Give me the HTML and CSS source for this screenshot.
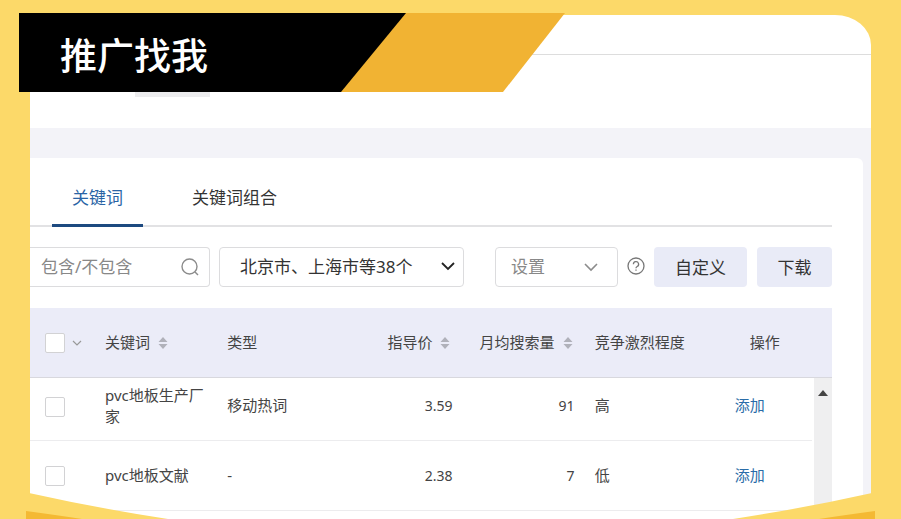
FILE: index.html
```html
<!DOCTYPE html>
<html lang="zh-CN">
<head>
  <meta charset="UTF-8" />
  <meta name="viewport" content="width=device-width, initial-scale=1.0" />
  <title>推广找我</title>
  <link rel="stylesheet" href="styles.css">
</head>
<body>

<div class="page">
  <!-- Banner -->
  <header class="banner">
    <h1 class="banner-title">推广找我</h1>
  </header>

  <main class="panel">
    <div class="topbar"></div>
    <div class="subbar"><span class="chip"></span></div>

    <div class="content">
      <section class="card">
        <nav class="tabs">
          <a href="#" class="tab active">关键词</a>
          <a href="#" class="tab">关键词组合</a>
        </nav>

        <!-- Filters -->
        <div class="toolbar">
          <label class="search">
            <input type="text" placeholder="包含/不包含" aria-label="包含/不包含">
            <svg width="20" height="20" viewBox="0 0 20 20" fill="none" stroke="#8c8c8c" stroke-width="1.4">
              <circle cx="9.5" cy="9.5" r="7.5"/>
              <path d="M15 15l3 3"/>
            </svg>
          </label>
          <div class="select region">
            <select aria-label="地域">
              <option>北京市、上海市等38个</option>
            </select>
            <svg width="14" height="10" viewBox="0 0 14 10" fill="none" stroke="#222" stroke-width="1.8">
              <path d="M1 1l6 6 6-6"/>
            </svg>
          </div>
          <div class="select setting">
            <select aria-label="设置">
              <option>设置</option>
            </select>
            <svg width="14" height="10" viewBox="0 0 14 10" fill="none" stroke="#8c8c8c" stroke-width="1.6">
              <path d="M1 2l6 6 6-6"/>
            </svg>
          </div>
          <button class="help" aria-label="帮助">
            <svg width="18" height="18" viewBox="0 0 18 18" fill="none" stroke="#777" stroke-width="1.3">
              <circle cx="9" cy="9" r="8"/>
              <path d="M6.4 7.2a2.6 2.6 0 1 1 3.8 2.3c-.8.4-1.2.8-1.2 1.7M9 12.4v1.4"/>
            </svg>
          </button>
          <button class="btn btn-custom">自定义</button>
          <button class="btn btn-download">下载</button>
        </div>

        <!-- Keyword list -->
        <table class="keywords">
          <colgroup>
            <col class="col-check">
            <col class="col-word">
            <col class="col-type">
            <col class="col-num">
            <col class="col-num">
            <col class="col-level">
            <col class="col-action">
            <col class="col-scroll">
          </colgroup>
          <thead>
            <tr>
              <th class="check">
                <div class="check-all">
                  <input type="checkbox" aria-label="全选">
                  <svg width="10" height="6" viewBox="0 0 10 6" fill="none" stroke="#999" stroke-width="1.2">
                    <path d="M1 1l4 4 4-4"/>
                  </svg>
                </div>
              </th>
              <th>关键词<svg class="sort" width="10" height="14" viewBox="0 0 10 14"><path d="M5 1l4.500 5h-9zM5 13l4.500-5h-9z"/></svg></th>
              <th>类型</th>
              <th class="num">指导价<svg class="sort" width="10" height="14" viewBox="0 0 10 14"><path d="M5 1l4.500 5h-9zM5 13l4.500-5h-9z"/></svg></th>
              <th class="num">月均搜索量<svg class="sort" width="10" height="14" viewBox="0 0 10 14"><path d="M5 1l4.500 5h-9zM5 13l4.500-5h-9z"/></svg></th>
              <th class="level">竞争激烈程度</th>
              <th class="action" colspan="2">操作</th>
            </tr>
          </thead>
          <tbody>
            <tr class="row-short">
              <td class="check"><input type="checkbox" aria-label="pvc地板生产厂家"></td>
              <td class="word">pvc地板生产厂家</td>
              <td>移动热词</td>
              <td class="num">3.59</td>
              <td class="num">91</td>
              <td class="level">高</td>
              <td class="action"><a href="#">添加</a></td>
              <td class="scroll" rowspan="2">
                <svg width="10" height="6" viewBox="0 0 10 6"><path d="M5 0l5 6H0z" fill="#444"/></svg>
              </td>
            </tr>
            <tr>
              <td class="check"><input type="checkbox" aria-label="pvc地板文献"></td>
              <td class="word">pvc地板文献</td>
              <td>-</td>
              <td class="num">2.38</td>
              <td class="num">7</td>
              <td class="level">低</td>
              <td class="action"><a href="#">添加</a></td>
            </tr>
          </tbody>
        </table>
      </section>
    </div>
  </main>

  <!-- Curved bottom frame -->
  <svg class="frame" viewBox="0 0 901 27" preserveAspectRatio="none">
    <path d="M0 1H29Q96 16 168 27H0zM901 1H872Q805 16 733 27H901z" fill="#fcd969"/>
    <path d="M26 19Q56 23 82 27H26zM875 19Q845 23 819 27H875z" fill="#f4b934"/>
  </svg>
</div>

</body>
</html>
```

FILE: styles.css
```css
* {
  box-sizing: border-box;
}

body {
  margin: 0;
  background: #fcd969;
  color: #444;
  font-family: "Noto Sans", "Noto Sans CJK SC", sans-serif;
  font-size: 15px;
}

.page {
  position: relative;
  height: 100vh;
  padding: 15px 30px 0;
  overflow: hidden;
}

/* Banner */
.banner {
  position: absolute;
  top: 13px;
  left: 19px;
  width: 546px;
  height: 79px;
  padding: 3px 0 0 41px;
  display: flex;
  align-items: center;
  background: #f1b333;
  clip-path: polygon(0 0, 100% 0, 484px 100%, 0 100%);
  z-index: 1;
}

.banner::before {
  content: "";
  position: absolute;
  inset: 0;
  background: #000;
  clip-path: polygon(0 0, 387px 0, 322px 100%, 0 100%);
}

.banner-title {
  position: relative;
  margin: 0;
  color: #fff;
  font-family: "Noto Sans CJK SC", sans-serif;
  font-size: 37px;
  font-weight: 500;
}

/* Panel */
.panel {
  background: #fff;
  border-top-right-radius: 36px 30px;
  overflow: hidden;
}

.topbar {
  height: 40px;
  border-bottom: 1px solid #ddd;
}

.subbar {
  height: 73px;
  padding: 32px 0 0 105px;
}

.chip {
  display: block;
  width: 75px;
  height: 10px;
  background: #ececee;
}

.content {
  padding: 30px 8px 0 0;
  background: #f3f3f8;
}

.card {
  height: 400px;
  padding-right: 31px;
  background: #fff;
  border-top-right-radius: 6px;
}

.tabs {
  display: flex;
  gap: 29px;
  height: 69px;
  padding-left: 22px;
  border-bottom: 2px solid #e2e2e4;
}

.tab {
  height: 69px;
  padding: 0 20px;
  color: #333;
  font-size: 17px;
  line-height: 80px;
  text-decoration: none;
}

.tab.active {
  border-bottom: 3px solid #1d4a80;
  color: #2a64a5;
}

/* Toolbar */
.toolbar {
  display: flex;
  align-items: center;
  height: 81px;
  padding-bottom: 2px;
}

.search,
.select {
  display: flex;
  align-items: center;
  height: 40px;
  border: 1px solid #dcdcde;
  border-radius: 4px;
}

.search {
  width: 180px;
  margin-right: 9px;
  padding: 0 9px 0 11px;
  border-left: none;
  border-radius: 0 4px 4px 0;
}

.search input,
.select select {
  flex: 1;
  min-width: 0;
  padding: 0;
  border: none;
  outline: none;
  background: none;
  color: #333;
  font: inherit;
  font-size: 17px;
  appearance: none;
}

.search input::placeholder {
  color: #888;
}

.region {
  width: 245px;
  padding: 0 8px 0 20px;
}

.setting {
  width: 123px;
  margin-left: auto;
  padding: 0 19px 0 15px;
}

.setting select {
  color: #888;
}

.help {
  display: flex;
  margin: 0 9px;
  padding: 0 0 2px;
  border: none;
  background: none;
}

.btn {
  height: 40px;
  padding: 0;
  border: none;
  border-radius: 4px;
  background: #e9ebf7;
  color: #333;
  font: inherit;
  font-size: 17px;
}

.btn-custom {
  width: 93px;
  margin-right: 10px;
}

.btn-download {
  width: 75px;
}

/* Table */
.keywords {
  width: 100%;
  border-collapse: separate;
  border-spacing: 0;
  table-layout: fixed;
  line-height: 21px;
}

.col-check { width: 75px; }
.col-word { width: 122px; }
.col-type { width: 103px; }
.col-num { width: 122px; }
.col-level { width: 113px; }
.col-action { width: 124px; }
.col-scroll { width: 20px; }

.keywords th,
.keywords td {
  padding: 0;
  font-weight: 400;
  text-align: left;
}

.keywords th {
  height: 70px;
  background: #ebecf8;
  border-bottom: 1px solid #d8d8de;
}

.keywords td {
  height: 70px;
  border-bottom: 1px solid #ececee;
}

.keywords .row-short td {
  height: 63px;
  padding-bottom: 7px;
}

.keywords .row-short .check {
  padding-bottom: 4px;
}

.keywords .num {
  text-align: right;
}

.keywords td.num {
  font-size: 14px;
}

.keywords .level {
  padding-left: 20px;
}

.keywords .action {
  text-align: center;
}

.keywords th.action {
  padding-left: 10px;
}

.keywords .check {
  padding-left: 15px;
}

.keywords .word {
  padding-right: 20px;
}

.keywords .row-short .scroll {
  padding-top: 9px;
  border-left: 2px solid #fff;
  background: #efeff0;
  line-height: 6px;
  text-align: center;
  vertical-align: top;
}

.keywords a {
  color: #2a6ca8;
  text-decoration: none;
}

.check-all {
  display: flex;
  align-items: center;
  gap: 7px;
}

.keywords input {
  display: block;
  width: 20px;
  height: 20px;
  margin: 0;
  appearance: none;
  border: 1px solid #d2d2d4;
  border-radius: 2px;
  background: #fff;
}

.sort {
  margin: 0 2px 0 8px;
  fill: #b0b1ba;
  vertical-align: -2px;
}

/* Bottom frame */
.frame {
  position: absolute;
  left: 0;
  bottom: 0;
  width: 100%;
  height: 27px;
}
```
